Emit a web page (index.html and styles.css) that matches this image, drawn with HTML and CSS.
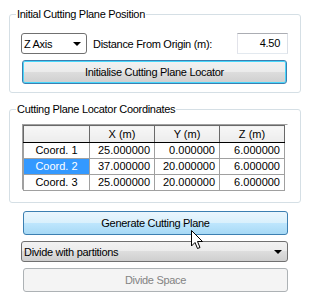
FILE: index.html
```html
<!DOCTYPE html>
<html lang="en">
<head>
    <meta charset="UTF-8">
    <title>Cutting Plane</title>
    <link rel="stylesheet" href="styles.css">
</head>
<body>

<div class="panel">
    <fieldset class="group group-position">
        <legend>Initial Cutting Plane Position</legend>
        <div class="row">
            <div class="combo">
                <span>Z Axis</span>
                <span class="arrow"></span>
            </div>
            <span class="label">Distance From Origin (m):</span>
            <div class="textbox">4.50</div>
        </div>
        <button class="btn btn-focus">Initialise Cutting Plane Locator</button>
    </fieldset>

    <fieldset class="group group-coords">
        <legend>Cutting Plane Locator Coordinates</legend>
        <div class="grid">
            <table>
                <tr>
                    <th class="corner"></th>
                    <th>X (m)</th>
                    <th>Y (m)</th>
                    <th>Z (m)</th>
                </tr>
                <tr>
                    <td class="rowhead">Coord. 1</td>
                    <td>25.000000</td>
                    <td>0.000000</td>
                    <td>6.000000</td>
                </tr>
                <tr>
                    <td class="rowhead selected">Coord. 2</td>
                    <td>37.000000</td>
                    <td>20.000000</td>
                    <td>6.000000</td>
                </tr>
                <tr>
                    <td class="rowhead">Coord. 3</td>
                    <td>25.000000</td>
                    <td>20.000000</td>
                    <td>6.000000</td>
                </tr>
            </table>
        </div>
    </fieldset>

    <div class="actions">
        <button class="btn btn-hover">Generate Cutting Plane</button>
        <div class="dropdown">
            <span>Divide with partitions</span>
            <span class="arrow"></span>
        </div>
        <button class="btn btn-disabled">Divide Space</button>

        <!-- mouse pointer over the generate button -->
        <svg class="cursor" width="13" height="20" viewBox="0 0 13 20">
            <path d="M0.5 0.5 L0.5 16 L4 12.5 L6.5 18.5 L9 17.5 L6.5 11.5 L11.5 11.5 Z" fill="#fff" stroke="#000" stroke-width="1" stroke-linejoin="miter"/>
        </svg>
    </div>
</div>

</body>
</html>
```

FILE: styles.css
```css
body {
    margin: 0;
    background-color: #fff;
    font-family: "Liberation Sans", Arial, sans-serif;
    font-size: 11px;
    letter-spacing: -0.3px;
    color: #000;
}

.panel {
    padding: 8px 17px 0 9px;
}

.group {
    margin: 0;
    border: 1px solid #d5dfe5;
    border-radius: 3px;
    min-width: 0;
}

.group legend {
    padding: 0 1px;
    margin-left: -5px;
    line-height: 13px;
    height: 13px;
}

.group-position {
    padding: 12px 12px 8px 11px;
}

.group-coords {
    margin-top: 10px;
    padding: 8px 12px 12px 11px;
}

.row {
    display: flex;
    align-items: center;
    height: 21px;
}

.combo {
    width: 66px;
    height: 21px;
    box-sizing: border-box;
    border: 1px solid #707070;
    border-radius: 3px;
    background-color: #fff;
    display: flex;
    align-items: center;
    justify-content: space-between;
    padding: 0 5px 0 2px;
}

.arrow {
    width: 0;
    height: 0;
    border-left: 4px solid transparent;
    border-right: 4px solid transparent;
    border-top: 4px solid #000;
}

.label {
    margin-left: 6px;
    flex: 1;
}

.textbox {
    width: 51px;
    height: 21px;
    box-sizing: border-box;
    border: 1px solid #abadb3;
    border-left-color: #e2e3ea;
    border-bottom-color: #e3e9ef;
    border-right-color: #dbdfe6;
    text-align: right;
    line-height: 19px;
    padding-right: 7px;
}

.btn {
    display: block;
    width: 265px;
    height: 24px;
    margin: 6px 0 0 1px;
    font-family: inherit;
    font-size: 11px;
    letter-spacing: -0.3px;
    color: #000;
    border: 1px solid #707070;
    border-radius: 3px;
    background: linear-gradient(#f2f2f2 0%, #ebebeb 50%, #dddddd 50%, #cfcfcf 100%);
    padding: 0;
}

.btn-focus {
    border-color: #3c7fb1;
    box-shadow: inset 0 0 0 1px #48d7fb;
}

.btn-hover {
    margin-top: 8px;
    border-color: #3c7fb1;
    background: linear-gradient(#eaf6fd 0%, #d9f0fc 50%, #bee6fd 50%, #a7d9f5 100%);
}

.btn-disabled {
    border-color: #adb2b5;
    background: #f4f4f4;
    color: #838383;
}

.grid {
    width: 266px;
    height: 66px;
    margin-left: 1px;
    box-sizing: border-box;
    border-top: 1px solid #a0a0a0;
    border-left: 1px solid #a0a0a0;
    border-right: 1px solid #fff;
    border-bottom: 1px solid #fff;
    background-color: #fff;
    letter-spacing: 0;
}

.grid table {
    border-collapse: collapse;
    border-top: 1px solid #696969;
    border-left: 1px solid #696969;
    border-right: 1px solid #696969;
}

.grid th {
    width: 64px;
    height: 16px;
    padding: 0;
    font-weight: normal;
    text-align: center;
    background: linear-gradient(#f7f7f7, #ececec);
    border-right: 1px solid #696969;
    border-bottom: 1px solid #000;
}

.grid th.corner {
    width: 65px;
}

.grid td {
    height: 15px;
    padding: 0 4px 0 0;
    text-align: right;
    border: 1px solid #a0a0a0;
    border-top: none;
    line-height: 15px;
}

.grid td.rowhead {
    text-align: center;
    padding: 0;
}

.grid td.selected {
    background-color: #3399ff;
    color: #fff;
}

.actions {
    position: relative;
    margin-left: 13px;
}

.dropdown {
    width: 267px;
    height: 21px;
    margin: 6px 0 0 -1px;
    box-sizing: border-box;
    border: 1px solid #707070;
    border-radius: 3px;
    background: linear-gradient(#f2f2f2 0%, #ebebeb 50%, #dddddd 50%, #cfcfcf 100%);
    display: flex;
    align-items: center;
    justify-content: space-between;
    padding: 0 5px 0 2px;
}

.cursor {
    position: absolute;
    left: 169px;
    top: 19px;
}
```
